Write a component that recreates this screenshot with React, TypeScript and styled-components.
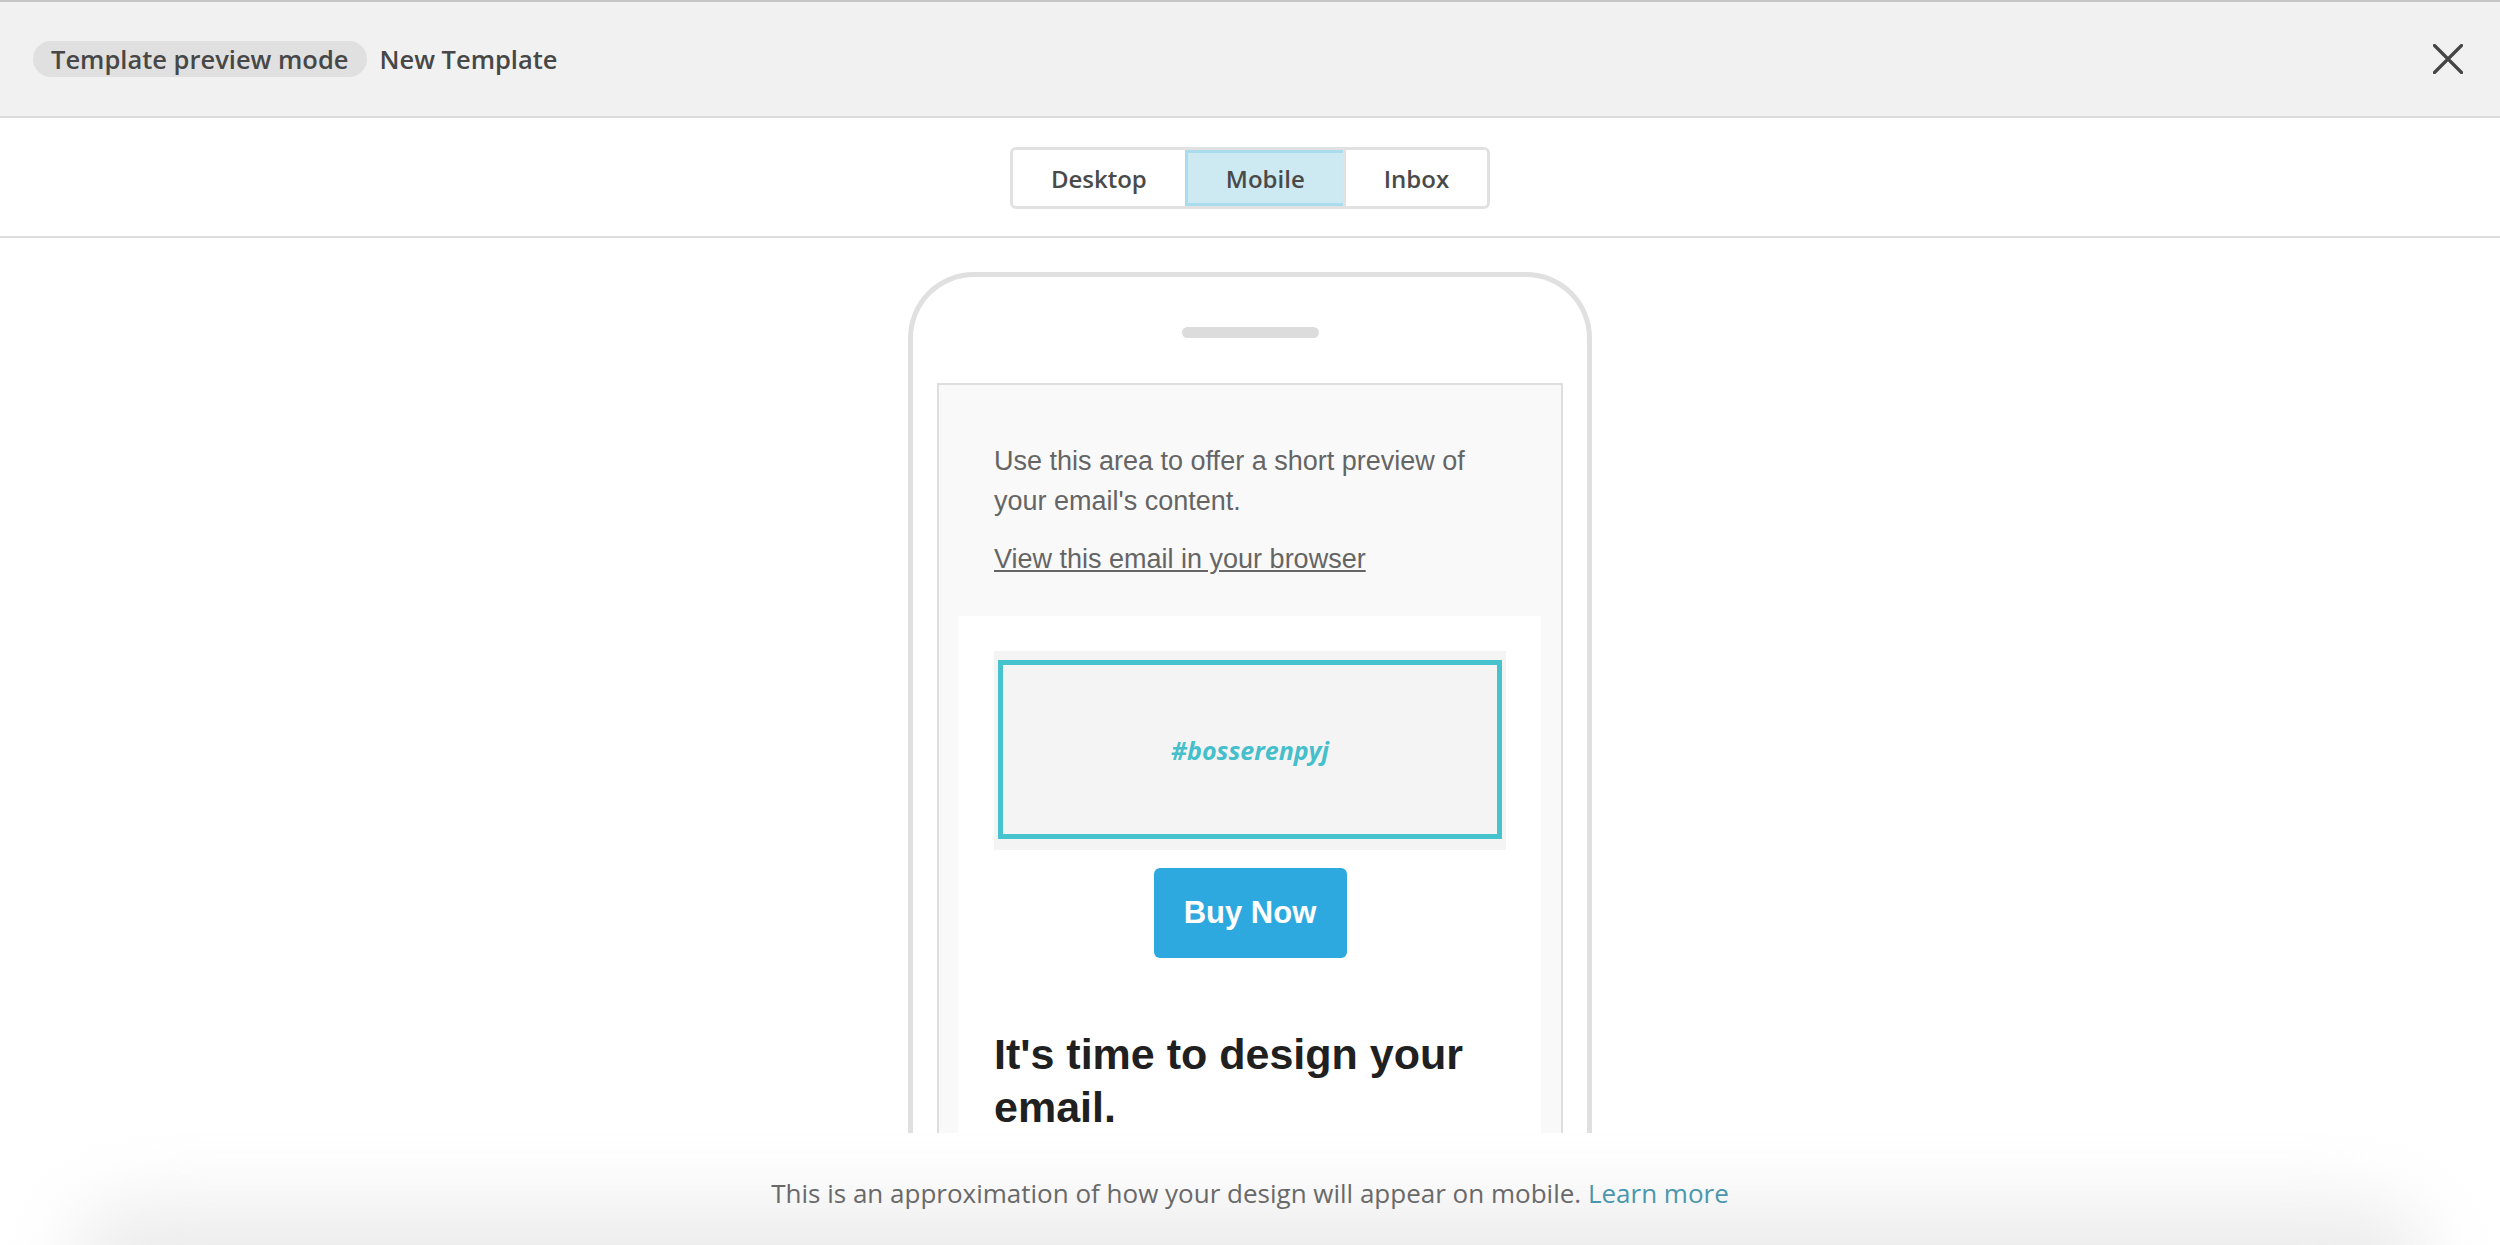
import React, { useState } from 'react';
import styled, { createGlobalStyle } from 'styled-components';

const GlobalStyle = createGlobalStyle`
  html, body, #root {
    height: 100%;
  }
  body {
    margin: 0;
    background: #fff;
    font-family: 'Open Sans', 'Liberation Sans', sans-serif;
  }
  * {
    box-sizing: border-box;
  }
`;

const Page = styled.div`
  height: 100vh;
  display: flex;
  flex-direction: column;
  overflow: hidden;
`;

const Header = styled.header`
  flex: 0 0 118px;
  display: flex;
  align-items: center;
  justify-content: space-between;
  padding: 0 37px 0 33px;
  background: #f1f1f1;
  border-top: 2px solid #c6c6c6;
  border-bottom: 2px solid #dcdcdc;
`;

const Title = styled.div`
  display: flex;
  align-items: center;
  gap: 12px;
  font-size: 25.5px;
  font-weight: 600;
  color: #474747;
`;

const ModePill = styled.span`
  display: inline-flex;
  align-items: center;
  height: 36px;
  padding: 0 19px 0 18px;
  border-radius: 18px;
  background: #e0e0e0;
`;

const CloseButton = styled.button`
  display: flex;
  padding: 0;
  border: 0;
  background: none;
  cursor: pointer;
`;

const Toolbar = styled.nav`
  flex: 0 0 120px;
  display: flex;
  justify-content: center;
  align-items: flex-start;
  padding-top: 29px;
  border-bottom: 2px solid #dedede;
`;

const TabGroup = styled.div`
  display: flex;
  border: 3px solid #e1e1e1;
  border-radius: 6px;
  overflow: hidden;
`;

const Tab = styled.button<{ $active?: boolean }>`
  height: 56px;
  padding: 0 38px;
  border: 0;
  border-left: 3px solid ${p => (p.$active ? '#a9dcec' : '#e1e1e1')};
  ${p => p.$active && 'border-right: 3px solid #a9dcec; margin-right: -3px; box-shadow: inset 0 3px 0 #a9dcec, inset 0 -3px 0 #a9dcec;'}
  background: ${p => (p.$active ? '#cdeaf3' : '#fff')};
  font-family: 'Open Sans', sans-serif;
  font-size: 24px;
  font-weight: 600;
  color: #4a4a4a;
  cursor: pointer;

  &:first-child {
    border-left: 0;
  }
`;

const Preview = styled.main`
  flex: 1 1 auto;
  min-height: 0;
  overflow: hidden;
  display: flex;
  justify-content: center;
  align-items: flex-start;
  padding-top: 34px;
`;

const Phone = styled.div`
  width: 684px;
  flex-shrink: 0;
  border: 5px solid #e0e0e0;
  border-bottom: 0;
  border-radius: 66px 66px 0 0;
  padding: 50px 24px 0;
  display: flex;
  flex-direction: column;
  align-items: center;
`;

const Speaker = styled.div`
  flex-shrink: 0;
  width: 137px;
  height: 11px;
  border-radius: 6px;
  background: #dcdcdc;
  margin-bottom: 45px;
`;

const Screen = styled.div`
  align-self: stretch;
  border: 2px solid #dedede;
  border-bottom: 0;
  background: #f9f9f9;
  padding: 0 20px 0 19px;
  font-family: 'Liberation Sans', Arial, sans-serif;
`;

const Preheader = styled.div`
  padding: 56px 36px 37px;
  font-size: 27px;
  line-height: 40px;
  color: #656565;

  p {
    margin: 0 0 18px;
  }
  p:last-child {
    margin: 0;
  }
  a {
    color: #656565;
    text-decoration: underline;
  }
`;

const EmailBody = styled.div`
  background: #fff;
  padding: 35px 35px 120px 36px;
  display: flex;
  flex-direction: column;
  align-items: center;
`;

const ImageBlock = styled.div`
  align-self: stretch;
  height: 199px;
  background: #f4f4f4;
  padding: 9px 4px 11px;
  display: flex;
`;

const Placeholder = styled.div`
  flex: 1;
  border: 5px solid #47c3cd;
  display: flex;
  align-items: center;
  justify-content: center;
  font-family: 'Open Sans', sans-serif;
  font-style: italic;
  font-weight: 700;
  font-size: 25px;
  color: #45bfcb;
`;

const BuyButton = styled.a`
  margin-top: 18px;
  width: 193px;
  height: 90px;
  display: flex;
  align-items: center;
  justify-content: center;
  border-radius: 6px;
  background: #2ea9df;
  color: #fff;
  font-weight: 700;
  font-size: 31px;
  text-decoration: none;
`;

const Heading = styled.h1`
  align-self: stretch;
  margin: 70px 0 0;
  font-size: 43px;
  line-height: 53px;
  font-weight: 700;
  color: #202020;
`;

const Footer = styled.footer`
  flex: 0 0 112px;
  position: relative;
  overflow: hidden;
  display: flex;
  justify-content: center;
  padding-top: 42px;
  font-size: 26px;
  color: #696969;

  &::before {
    content: '';
    position: absolute;
    left: 70px;
    right: 70px;
    top: 70px;
    bottom: -90px;
    border-radius: 80px;
    background: #ececec;
    filter: blur(36px);
  }

  span {
    position: relative;
  }
  a {
    color: #4a97ad;
    text-decoration: none;
  }
`;

const tabs = ['Desktop', 'Mobile', 'Inbox'];

export default function App() {
  const [view, setView] = useState('Mobile');

  return (
    <Page>
      <GlobalStyle />
      <Header>
        <Title>
          <ModePill>Template preview mode</ModePill>
          <span>New Template</span>
        </Title>
        <CloseButton aria-label='Close'>
          <svg width='30' height='30' viewBox='0 0 30 30'>
            <path d='M1.5 1.5 L28.5 28.5 M28.5 1.5 L1.5 28.5' stroke='#454545' strokeWidth='3.2' strokeLinecap='round' />
          </svg>
        </CloseButton>
      </Header>

      <Toolbar>
        <TabGroup>
          {tabs.map(t => (
            <Tab key={t} $active={view === t} onClick={() => setView(t)}>
              {t}
            </Tab>
          ))}
        </TabGroup>
      </Toolbar>

      <Preview>
        <Phone>
          <Speaker />
          <Screen>
            <Preheader>
              <p>Use this area to offer a short preview of your email's content.</p>
              <p>
                <a href='#'>View this email in your browser</a>
              </p>
            </Preheader>
            <EmailBody>
              <ImageBlock>
                <Placeholder>#bosserenpyj</Placeholder>
              </ImageBlock>
              <BuyButton href='#'>Buy Now</BuyButton>
              <Heading>It's time to design your email.</Heading>
            </EmailBody>
          </Screen>
        </Phone>
      </Preview>

      <Footer>
        <span>
          This is an approximation of how your design will appear on mobile. <a href='#'>Learn more</a>
        </span>
      </Footer>
    </Page>
  );
}
